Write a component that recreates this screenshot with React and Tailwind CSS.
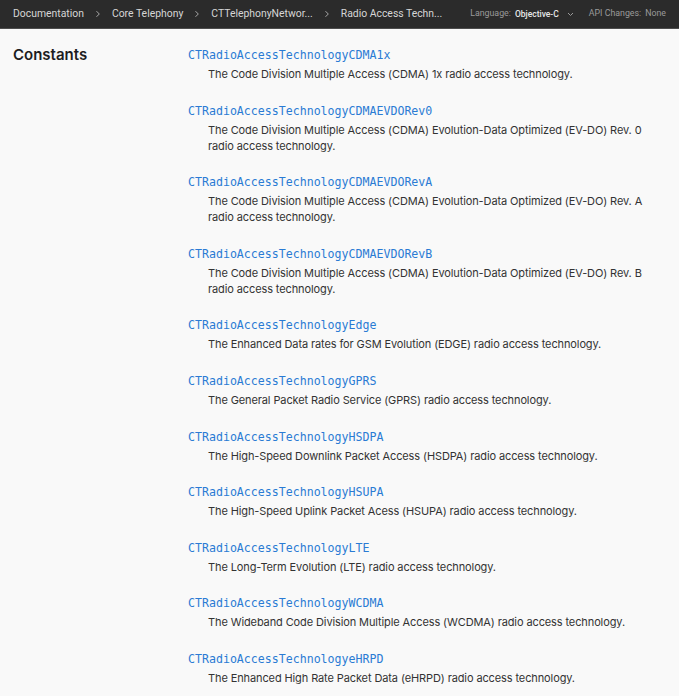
import React from "react";

const items = [
  ["CTRadioAccessTechnologyCDMA1x", "The Code Division Multiple Access (CDMA) 1x radio access technology."],
  ["CTRadioAccessTechnologyCDMAEVDORev0", "The Code Division Multiple Access (CDMA) Evolution-Data Optimized (EV-DO) Rev. 0 radio access technology."],
  ["CTRadioAccessTechnologyCDMAEVDORevA", "The Code Division Multiple Access (CDMA) Evolution-Data Optimized (EV-DO) Rev. A radio access technology."],
  ["CTRadioAccessTechnologyCDMAEVDORevB", "The Code Division Multiple Access (CDMA) Evolution-Data Optimized (EV-DO) Rev. B radio access technology."],
  ["CTRadioAccessTechnologyEdge", "The Enhanced Data rates for GSM Evolution (EDGE) radio access technology."],
  ["CTRadioAccessTechnologyGPRS", "The General Packet Radio Service (GPRS) radio access technology."],
  ["CTRadioAccessTechnologyHSDPA", "The High-Speed Downlink Packet Access (HSDPA) radio access technology."],
  ["CTRadioAccessTechnologyHSUPA", "The High-Speed Uplink Packet Acess (HSUPA) radio access technology."],
  ["CTRadioAccessTechnologyLTE", "The Long-Term Evolution (LTE) radio access technology."],
  ["CTRadioAccessTechnologyWCDMA", "The Wideband Code Division Multiple Access (WCDMA) radio access technology."],
  ["CTRadioAccessTechnologyeHRPD", "The Enhanced High Rate Packet Data (eHRPD) radio access technology."],
];

const Chevron = () => (
  <svg width="6" height="8" viewBox="0 0 6 8" className="mx-[11px] shrink-0">
    <path d="M1.5 1.2 L4.3 4 L1.5 6.8" fill="none" stroke="#a8a8a8" strokeWidth="1" />
  </svg>
);

export default function App() {
  return (
    <div className="min-h-[696px] bg-[#f9f9f9] font-['Roboto',sans-serif]">
      <div className="h-[29px] bg-[#2b2b2b] border-b border-[#4d4d4d] flex items-center pl-[13px] pr-[13px] text-[10.4px] text-[#d6d6d6] whitespace-nowrap">
        <span>Documentation</span>
        <Chevron />
        <span>Core Telephony</span>
        <Chevron />
        <span>CTTelephonyNetwor...</span>
        <Chevron />
        <span>Radio Access Techn...</span>
        <div className="ml-auto flex items-center text-[8.8px]">
          <span className="text-[#9a9a9a]">Language:</span>
          <span className="ml-[4px] text-[#e8e8e8] text-[8.5px] font-medium">Objective-C</span>
          <svg width="7" height="5" viewBox="0 0 7 5" className="ml-[8px]">
            <path d="M1 1 L3.5 3.5 L6 1" fill="none" stroke="#9a9a9a" strokeWidth="1" />
          </svg>
          <span className="ml-[15px] text-[#9a9a9a]">API Changes:</span>
          <span className="ml-[4px] text-[#9a9a9a]">None</span>
        </div>
      </div>
      <div className="flex pt-[16px]">
        <div className="w-[188px] pl-[13px]">
          <h2 className="font-['Inter',sans-serif] text-[15px] font-semibold text-[#1d1d1f] leading-[20px]">Constants</h2>
        </div>
        <div className="flex-1 pr-[30px]">
          {items.map(([name, desc]) => (
            <div key={name} className="mb-[18.6px]">
              <div className="font-['DejaVu_Sans_Mono',monospace] text-[11.6px] leading-[20px] text-[#2a7bd4]">{name}</div>
              <div className="pl-[20px] font-['Inter',sans-serif] text-[11px] tracking-[-0.11px] leading-[16px] text-[#333] mt-[1px]">{desc}</div>
            </div>
          ))}
        </div>
      </div>
    </div>
  );
}
